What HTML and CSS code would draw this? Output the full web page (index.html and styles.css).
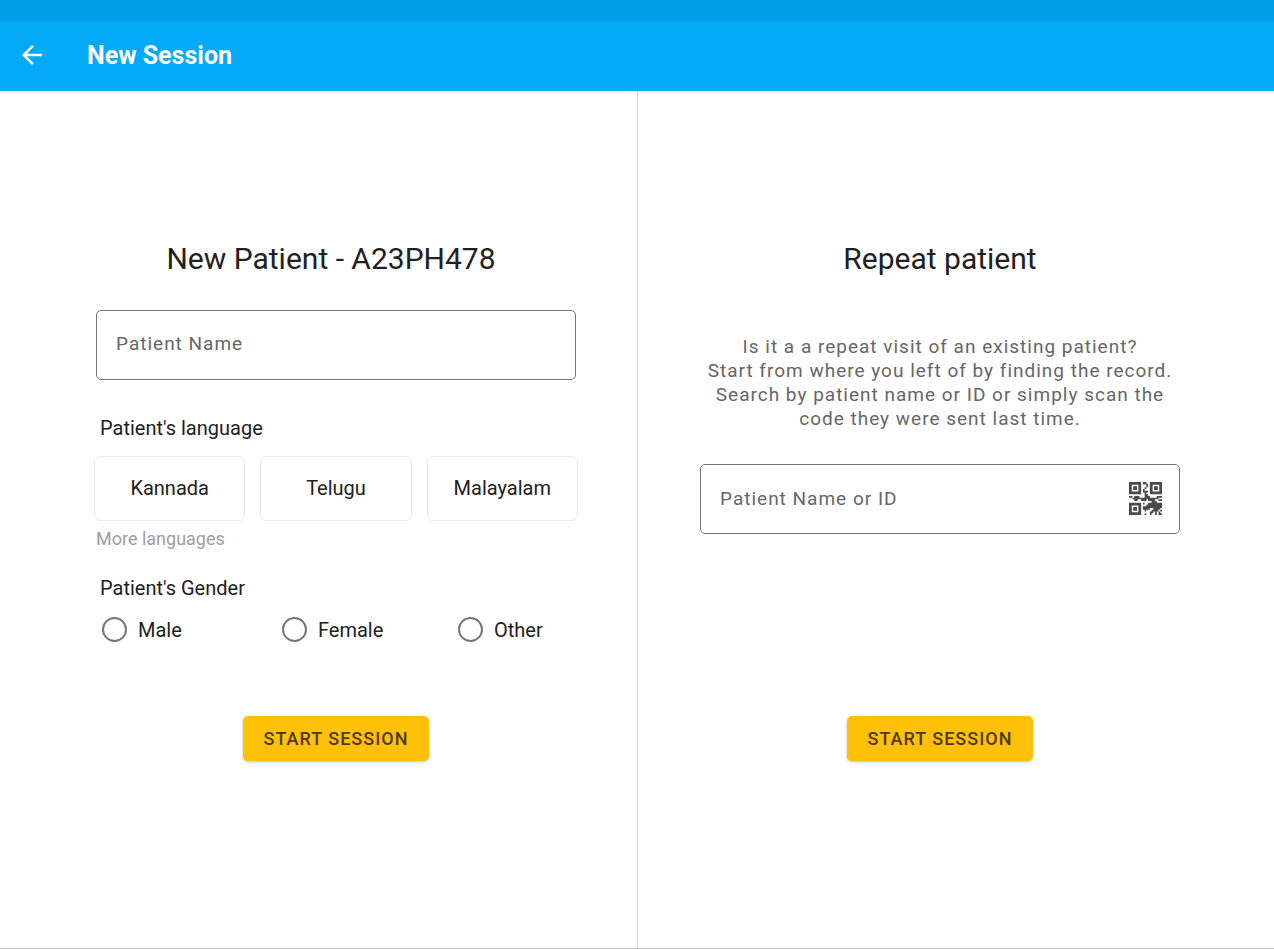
FILE: index.html
```html
<!DOCTYPE html>
<html lang="en">
<head>
    <meta charset="UTF-8">
    <meta name="viewport" content="width=device-width, initial-scale=1.0">
    <title>New Session</title>
    <link rel="stylesheet" href="styles.css">
</head>
<body>
    <header class="app-bar">
        <a href="#" class="back-link" aria-label="Back">
            <svg width="30" height="30" viewBox="0 0 24 24" fill="#fff">
                <path d="M20 11H7.83l5.59-5.59L12 4l-8 8 8 8 1.41-1.41L7.83 13H20v-2z"/>
            </svg>
        </a>
        <h1 class="app-title">New Session</h1>
    </header>

    <main class="panes">
        <form class="pane new-patient">
            <h2 class="pane-title">New Patient - A23PH478</h2>
            <input class="text-field" type="text" placeholder="Patient Name" aria-label="Patient Name">

            <h3 class="section-label">Patient's language</h3>
            <div class="languages">
                <button type="button" class="language">Kannada</button>
                <button type="button" class="language">Telugu</button>
                <button type="button" class="language">Malayalam</button>
            </div>
            <a href="#" class="more-link">More languages</a>

            <fieldset class="gender">
                <legend class="section-label">Patient's Gender</legend>
                <div class="gender-options">
                    <label class="radio"><input type="radio" name="gender" value="male">Male</label>
                    <label class="radio"><input type="radio" name="gender" value="female">Female</label>
                    <label class="radio"><input type="radio" name="gender" value="other">Other</label>
                </div>
            </fieldset>

            <button type="submit" class="start-btn">START SESSION</button>
        </form>

        <form class="pane repeat-patient">
            <h2 class="pane-title">Repeat patient</h2>
            <p class="hint">Is it a a repeat visit of an existing patient?<br>Start from where you left of by finding the record. Search by patient name or ID or simply scan the code they were sent last time.</p>
            <div class="search-field">
                <input class="search-input" type="text" placeholder="Patient Name or ID" aria-label="Patient Name or ID">
                <button type="button" class="scan-btn" aria-label="Scan code">
                    <svg width="33" height="33" viewBox="0 0 19 19" fill="#4a4a4a">
                        <!-- finder squares -->
                        <path fill-rule="evenodd" d="M0 0h7v7H0zM1.6 1.6v3.8h3.8V1.6zM2.4 2.4h2.2v2.2H2.4zM12 0h7v7h-7zM13.6 1.6v3.8h3.8V1.6zM14.4 2.4h2.2v2.2h-2.2zM0 12h7v7H0zM1.6 13.6v3.8h3.8v-3.8zM2.4 14.4h2.2v2.2H2.4z"/>
                        <!-- timing rows -->
                        <path d="M8 0h2v1h1v2h-1v1H9V3h1V1.500H8zM8 4h1v1h2v1h-1v1h1v1h1v1h4V8h3v1h-2v1h-2v1h-4v-1h-1v1H7v-1H5v1H3v-1H2V9h1V8h3v1h3V6H8zM0 8h2v1H0zM17 10h2v1h-2z"/>
                        <!-- data modules -->
                        <path d="M8 12h1v1H8zM11 12h2v-1h3v1h3v3h-1v1h1v1h-1v-1h-1v1h-1v2h-1v-2h-1v1h-1v1h-1v-2h1v-1h1v-1h-2v1h-2v1H9v-1H8v-2h2v-1h1zM9 18h1v1H9zM17 17h1v1h1v1h-2z"/>
                    </svg>
                </button>
            </div>
            <button type="submit" class="start-btn">START SESSION</button>
        </form>
    </main>
</body>
</html>
```
FILE: styles.css
```css
* {
    box-sizing: border-box;
}
body {
    margin: 0;
    min-height: 100vh;
    display: flex;
    flex-direction: column;
    font-family: Roboto, sans-serif;
    font-size: 20px;
    line-height: 24px;
    color: #212121;
    background: #fff;
}
input,
button {
    font-family: inherit;
    font-size: inherit;
    color: inherit;
}
.app-bar {
    display: flex;
    align-items: center;
    gap: 40px;
    height: 91px;
    padding: 0 17px;
    border-top: 21px solid #029de8;
    background: #04a9f7;
}
.back-link {
    display: flex;
    padding-bottom: 2px;
}
.app-title {
    margin: 0;
    font-size: 25px;
    font-weight: 700;
    line-height: 30px;
    color: #fff;
}
.panes {
    flex: 1;
    display: grid;
    grid-template-columns: 1fr 1fr;
    border-bottom: 1px solid #c8c8c8;
}
.pane {
    display: flex;
    flex-direction: column;
    padding-top: 150px;
    padding-bottom: 187px;
}
.new-patient {
    padding-left: 96px;
    padding-right: 61px;
}
.repeat-patient {
    padding-left: 62px;
    padding-right: 94px;
    border-left: 1px solid #d0d0d0;
}
.pane-title {
    margin: 0;
    font-size: 30px;
    font-weight: 400;
    line-height: 36px;
    text-align: center;
}
.new-patient .pane-title {
    padding-right: 10px;
}
.text-field,
.search-field {
    height: 70px;
    border: 1px solid #757575;
    border-radius: 5px;
    background: #fff;
}
.text-field {
    width: 100%;
    margin-top: 33px;
    padding: 0 19px 4px;
    font-size: 19px;
    letter-spacing: 1px;
}
.text-field::placeholder,
.search-input::placeholder {
    color: #666;
    opacity: 1;
}
.section-label {
    margin: 0;
    padding: 0 4px;
    font-size: 20px;
    font-weight: 400;
    line-height: 24px;
}
h3.section-label {
    margin-top: 36px;
}
.languages {
    display: grid;
    grid-template-columns: repeat(3, 1fr);
    gap: 15px;
    margin: 16px -2px 0;
}
.language {
    height: 65px;
    padding: 0 8px 2px;
    border: 1px solid #ebebeb;
    border-radius: 6px;
    background: #fff;
}
.more-link {
    align-self: flex-start;
    margin-top: 6px;
    font-size: 18px;
    color: #9e9e9e;
    text-decoration: none;
}
.gender {
    margin: 25px 0 0;
    padding: 0;
    border: 0;
}
.gender-options {
    display: grid;
    grid-template-columns: 180px 176px 1fr;
    padding: 17px 6px 0;
}
.radio {
    display: flex;
    align-items: center;
    gap: 11px;
}
.radio input {
    appearance: none;
    width: 25px;
    height: 25px;
    margin: 0;
    border: 2px solid #757575;
    border-radius: 50%;
}
.radio input:checked {
    background: radial-gradient(#04a9f7 45%, #fff 50%);
}
.start-btn {
    align-self: center;
    height: 45px;
    margin-top: auto;
    padding: 0 21px;
    border: 0;
    border-radius: 5px;
    background: #ffc107;
    box-shadow: 0 1px 3px rgba(0, 0, 0, 0.25);
    font-size: 18px;
    font-weight: 500;
    letter-spacing: 1px;
    color: #4f3b02;
}
.hint {
    margin: 58px 0 0;
    font-size: 19px;
    letter-spacing: 1px;
    text-align: center;
    color: #666;
}
.search-field {
    display: flex;
    align-items: center;
    margin-top: 33px;
    padding: 0 17px 2px 19px;
}
.search-input {
    flex: 1;
    min-width: 0;
    padding: 0;
    border: 0;
    outline: 0;
    background: none;
    font-size: 19px;
    letter-spacing: 1px;
}
.scan-btn {
    display: flex;
    padding: 0;
    border: 0;
    background: none;
}
```
